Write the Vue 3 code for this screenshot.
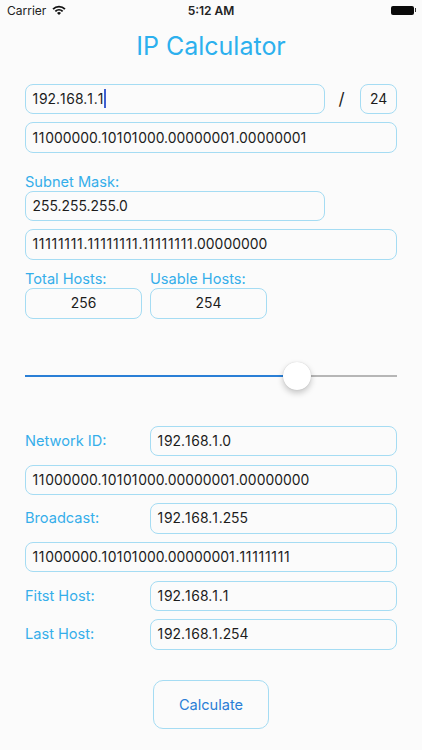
<script setup>
const details = [
  { label: 'Network ID:', value: '192.168.1.0', binary: '11000000.10101000.00000001.00000000' },
  { label: 'Broadcast:', value: '192.168.1.255', binary: '11000000.10101000.00000001.11111111' },
  { label: 'Fitst Host:', value: '192.168.1.1' },
  { label: 'Last Host:', value: '192.168.1.254' },
]

// The reference face sets its "1" wider than Inter does, so runs of ones get extra tracking.
const runs = (text) => text.split(/(1+)/).filter(Boolean)
</script>

<template>
  <div class="screen">
    <header class="status">
      <div class="status-left">
        <span>Carrier</span>
        <svg class="wifi" viewBox="0 0 14 10" width="14" height="10">
          <path d="M0.4 3.4A9.4 9.4 0 0 1 13.6 3.4L12.3 4.8A7.5 7.5 0 0 0 1.7 4.8Z" />
          <path d="M2.7 5.7A6.2 6.2 0 0 1 11.3 5.7L10 7A4.3 4.3 0 0 0 4 7Z" />
          <path d="M5 8A2.9 2.9 0 0 1 9 8L7 10Z" />
        </svg>
      </div>
      <span class="time">5:12 AM</span>
      <div class="battery"><i class="cell"></i><i class="nub"></i></div>
    </header>

    <h1 class="title">IP Calculator</h1>

    <main class="form">
      <div class="row ip-row">
        <div class="field ip">
          <span><span v-for="(r, i) in runs('192.168.1.1')" :key="i" :class="{ ones: r[0] === '1' }">{{ r }}</span></span>
          <i class="caret"></i>
        </div>
        <span class="slash">/</span>
        <div class="field prefix">24</div>
      </div>
      <div class="field">
        <span><span v-for="(r, i) in runs('11000000.10101000.00000001.00000001')" :key="i" :class="{ ones: r[0] === '1' }">{{ r }}</span></span>
      </div>

      <div class="label subnet-label">Subnet Mask:</div>
      <div class="field ip">255.255.255.0</div>
      <div class="field mask-bin">
        <span><span v-for="(r, i) in runs('11111111.11111111.11111111.00000000')" :key="i" :class="{ ones: r[0] === '1' }">{{ r }}</span></span>
      </div>

      <div class="hosts">
        <div class="host">
          <div class="label">Total Hosts:</div>
          <div class="field centered">256</div>
        </div>
        <div class="host">
          <div class="label">Usable Hosts:</div>
          <div class="field centered">254</div>
        </div>
      </div>

      <div class="slider">
        <div class="track-on"></div>
        <div class="track-off"></div>
        <div class="thumb"></div>
      </div>

      <div class="details">
        <template v-for="d in details" :key="d.label">
          <div class="row detail">
            <span class="label">{{ d.label }}</span>
            <div class="field value">
              <span><span v-for="(r, i) in runs(d.value)" :key="i" :class="{ ones: r[0] === '1' }">{{ r }}</span></span>
            </div>
          </div>
          <div v-if="d.binary" class="field">
            <span><span v-for="(r, i) in runs(d.binary)" :key="i" :class="{ ones: r[0] === '1' }">{{ r }}</span></span>
          </div>
        </template>
      </div>

      <button class="calc" type="button">Calculate</button>
    </main>
  </div>
</template>

<style>
html, body { margin: 0; background: #fbfbfb; }
</style>

<style scoped>
.screen {
  width: 422px;
  height: 750px;
  overflow: hidden;
  background: #fbfbfb;
  font-family: Inter, "Liberation Sans", sans-serif;
  color: #1c1c1c;
}
.status {
  height: 20px;
  padding: 0 5px 0 7px;
  display: flex;
  align-items: center;
  justify-content: space-between;
  position: relative;
  font-size: 12px;
  color: #222;
}
.status-left { display: flex; align-items: center; gap: 6px; }
.wifi { fill: #111; }
.time {
  position: absolute;
  left: 0;
  right: 0;
  text-align: center;
  font-weight: 600;
}
.battery { display: flex; align-items: center; margin-right: 1px; }
.cell { width: 23px; height: 9px; background: #0a0a0a; border-radius: 2px; }
.nub { width: 1.5px; height: 4px; background: #333; margin-left: 1px; }
.title {
  margin: 8px 0 0;
  height: 36px;
  line-height: 36px;
  text-align: center;
  font-size: 25px;
  font-weight: 400;
  color: #2cb0ee;
}
.form {
  padding: 19.7px 25px 0;
  display: flex;
  flex-direction: column;
}
.row { display: flex; align-items: center; }
.field {
  box-sizing: border-box;
  height: 30.5px;
  padding: 0 6.5px;
  display: flex;
  align-items: center;
  border: 1px solid #a5dcf3;
  border-radius: 8px;
  font-size: 13.9px;
  white-space: nowrap;
}
.ones { letter-spacing: 0.72px; }
.ip { width: 300px; }
.ip-row { margin-bottom: 8.17px; }
.caret { width: 2px; height: 19px; background: #3f5fd0; margin-left: 0; }
.slash { width: 35px; padding-right: 2px; box-sizing: border-box; text-align: center; font-size: 17px; }
.prefix { width: 37px; padding: 0; justify-content: center; }
.label { color: #35aeea; font-size: 14.6px; line-height: 18px; }
.subnet-label { margin-top: 19.8px; }
.mask-bin { margin-top: 8.1px; }
.hosts { display: flex; gap: 8px; margin-top: 10.5px; }
.host { width: 117px; }
.centered { justify-content: center; padding: 0; }
.slider {
  position: relative;
  height: 2px;
  margin-top: 55.9px;
  display: flex;
}
.track-on { width: 258px; background: #2a7fd6; }
.track-off { flex: 1; background: #b6b6b6; }
.thumb {
  position: absolute;
  left: 258px;
  top: -13px;
  width: 28px;
  height: 28px;
  border-radius: 50%;
  background: #fff;
  box-shadow: 0 3px 6px rgba(0, 0, 0, 0.22), 0 0 1px rgba(0, 0, 0, 0.2);
}
.details {
  margin-top: 49.3px;
  display: flex;
  flex-direction: column;
  gap: 8.17px;
}
.detail .label { width: 125px; }
.value { flex: 1; }
.calc {
  align-self: center;
  width: 116px;
  height: 49px;
  margin-top: 30.5px;
  background: transparent;
  border: 1px solid #a5dcf3;
  border-radius: 10px;
  color: #2a7fd6;
  font: 400 14.6px Inter, "Liberation Sans", sans-serif;
}
</style>
